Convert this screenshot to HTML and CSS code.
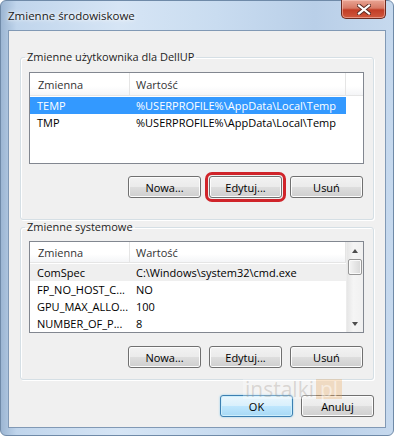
FILE: index.html
```html
<!DOCTYPE html>
<html lang="pl">
<head>
    <meta charset="UTF-8">
    <meta name="viewport" content="width=device-width, initial-scale=1.0">
    <title>Zmienne środowiskowe</title>
    <link rel="stylesheet" href="styles.css">
</head>
<body>

    <div class="window">
        <!-- Title bar -->
        <div class="titlebar">
            <span class="title">Zmienne środowiskowe</span>
            <button class="close-btn" aria-label="Zamknij">
                <svg width="14" height="11" viewBox="0 0 14 11">
                    <path d="M2 1.5 L12 9.5 M12 1.5 L2 9.5" stroke="#5a2a22" stroke-width="4" stroke-linecap="square"/>
                    <path d="M2 1.5 L12 9.5 M12 1.5 L2 9.5" stroke="#ffffff" stroke-width="2.2" stroke-linecap="square"/>
                </svg>
            </button>
        </div>

        <div class="client">
            <!-- User variables -->
            <fieldset class="group">
                <legend>Zmienne użytkownika dla DellUP</legend>
                <div class="listview">
                    <div class="lv-body">
                        <div class="lv-header">
                            <span class="col-name">Zmienna</span>
                            <span class="col-value">Wartość</span>
                            <span class="col-rest"></span>
                        </div>
                        <div class="lv-rows">
                            <div class="lv-row selected">
                                <span class="col-name">TEMP</span>
                                <span class="col-value">%USERPROFILE%\AppData\Local\Temp</span>
                            </div>
                            <div class="lv-row">
                                <span class="col-name">TMP</span>
                                <span class="col-value">%USERPROFILE%\AppData\Local\Temp</span>
                            </div>
                        </div>
                    </div>
                </div>
                <div class="btn-row">
                    <button class="btn">Nowa...</button>
                    <button class="btn marked">Edytuj...</button>
                    <button class="btn">Usuń</button>
                </div>
            </fieldset>

            <!-- System variables -->
            <fieldset class="group">
                <legend>Zmienne systemowe</legend>
                <div class="listview">
                    <div class="lv-body">
                        <div class="lv-header">
                            <span class="col-name">Zmienna</span>
                            <span class="col-value">Wartość</span>
                        </div>
                        <div class="lv-rows">
                            <div class="lv-row hot">
                                <span class="col-name">ComSpec</span>
                                <span class="col-value">C:\Windows\system32\cmd.exe</span>
                            </div>
                            <div class="lv-row">
                                <span class="col-name">FP_NO_HOST_C...</span>
                                <span class="col-value">NO</span>
                            </div>
                            <div class="lv-row">
                                <span class="col-name">GPU_MAX_ALLO...</span>
                                <span class="col-value">100</span>
                            </div>
                            <div class="lv-row">
                                <span class="col-name">NUMBER_OF_P...</span>
                                <span class="col-value">8</span>
                            </div>
                        </div>
                    </div>
                    <div class="scrollbar">
                        <div class="sb-arrow up"></div>
                        <div class="sb-thumb"></div>
                        <div class="sb-track"></div>
                        <div class="sb-arrow down"></div>
                    </div>
                </div>
                <div class="btn-row">
                    <button class="btn">Nowa...</button>
                    <button class="btn">Edytuj...</button>
                    <button class="btn">Usuń</button>
                </div>
            </fieldset>

            <div class="dialog-buttons">
                <button class="btn default">OK</button>
                <button class="btn">Anuluj</button>
            </div>
        </div>
    </div>

    <!-- watermark -->
    <div class="watermark">
        <span class="wm-text">instalki</span><span class="wm-pl">pl</span>
    </div>

</body>
</html>
```

FILE: styles.css
```css
body {
    margin: 0;
    background-color: #ffffff;
    font-family: "Open Sans", "Noto Sans", sans-serif;
    font-size: 11px;
    color: #000000;
}
.window {
    width: 394px;
    height: 436px;
    box-sizing: border-box;
    padding: 0 7px 7px 7px;
    display: flex;
    flex-direction: column;
    border: 1px solid #6f8aa8;
    border-radius: 6px;
    background: linear-gradient(to right, #9cb6d3 0%, #c0d5ec 4%, #d6e5f5 30%, #c9dcf0 55%, #b9cfe8 80%, #c6d9ee 100%);
}
.titlebar {
    height: 29px;
    display: flex;
    justify-content: space-between;
    align-items: flex-start;
}
.title {
    padding-top: 7px;
    font-size: 11.5px;
    color: #1a1a1a;
    text-shadow: 0 0 6px #ffffff, 0 0 3px #ffffff;
}
.close-btn {
    width: 45px;
    height: 19px;
    margin-top: -1px;
    padding: 0;
    border: 1px solid #6b2b20;
    border-top: none;
    border-radius: 0 0 5px 5px;
    background: linear-gradient(#e9a594 0%, #d77a66 45%, #c23d26 55%, #d0593e 100%);
    box-shadow: inset 0 0 0 1px rgba(255, 210, 200, 0.5);
    display: flex;
    align-items: center;
    justify-content: center;
}
.client {
    flex: 1;
    background-color: #f0f0f0;
    border: 1px solid #8199b5;
    padding: 19px 11px 0 11px;
}

/* group boxes */
.group {
    margin: 0;
    min-width: 0;
    padding: 8px 9px 21px 8px;
    border: 1px solid #d5dfe5;
    border-radius: 3px;
    box-shadow: inset 1px 1px 0 #ffffff, 1px 1px 0 #ffffff;
}
.group + .group {
    padding-top: 7px;
    padding-bottom: 11px;
}
.group legend {
    margin-left: -4px;
    padding: 0 2px;
    line-height: 14px;
    color: #1e1e1e;
}

/* list views */
.listview {
    height: 92px;
    box-sizing: border-box;
    border: 1px solid #828790;
    background-color: #ffffff;
    display: flex;
}
.lv-body {
    flex: 1;
    display: flex;
    flex-direction: column;
}
.lv-header {
    height: 22px;
    display: flex;
    border-bottom: 1px solid #e5e5e5;
    background: linear-gradient(#ffffff 0%, #ffffff 60%, #f4f5f7 100%);
    color: #333333;
}
.lv-header span {
    display: flex;
    align-items: center;
    border-right: 1px solid #e5e5e5;
}
.lv-header .col-rest {
    flex: 1;
    border-right: none;
}
.col-name {
    width: 100px;
    box-sizing: border-box;
    padding-left: 7px;
    white-space: nowrap;
    overflow: hidden;
}
.col-value {
    width: 216px;
    box-sizing: border-box;
    padding-left: 6px;
    white-space: nowrap;
    overflow: hidden;
}
.lv-header .col-name {
    padding-left: 8px;
}
.lv-rows {
    padding-top: 1px;
}
.lv-row {
    height: 17px;
    display: flex;
    align-items: center;
    width: 316px;
}
.lv-row.selected {
    background-color: #3399ff;
    color: #ffffff;
}
.lv-row.hot {
    background-color: #efefef;
}

/* scroll bar */
.scrollbar {
    width: 17px;
    display: flex;
    flex-direction: column;
    background: linear-gradient(to right, #e6e6e6, #f5f5f5 40%, #f0f0f0);
    border-left: 1px solid #ececec;
}
.sb-arrow {
    height: 17px;
    display: flex;
    align-items: center;
    justify-content: center;
}
.sb-arrow::after {
    content: "";
    border-left: 3px solid transparent;
    border-right: 3px solid transparent;
}
.sb-arrow.up::after {
    border-bottom: 4px solid #4d4d4d;
}
.sb-arrow.down::after {
    border-top: 4px solid #4d4d4d;
}
.sb-thumb {
    height: 14px;
    margin: 0 1px;
    border: 1px solid #979797;
    border-radius: 2px;
    background: linear-gradient(to right, #f5f5f5, #e6e6e6 50%, #d8d8d8);
    box-shadow: inset 0 0 0 1px #fafafa;
}
.sb-track {
    flex: 1;
}

/* buttons */
.btn-row {
    margin-top: 12px;
    display: flex;
    justify-content: flex-end;
    gap: 8px;
    padding-right: 1px;
}
.group + .group .btn-row {
    margin-top: 13px;
}
.btn {
    width: 73px;
    height: 22px;
    padding: 0;
    border: 1px solid #707070;
    border-radius: 3px;
    background: linear-gradient(#f2f2f2 0%, #ebebeb 48%, #dddddd 52%, #cfcfcf 100%);
    box-shadow: inset 0 0 0 1px #fcfcfc;
    font-family: "Open Sans", "Noto Sans", sans-serif;
    font-size: 11px;
    color: #000000;
}
.btn.marked {
    outline: 3px solid #d0242a;
    outline-offset: 1px;
}
.btn.default {
    border-color: #3c7fb1;
    background: linear-gradient(#eaf6fd 0%, #d9f0fc 48%, #bee6fd 52%, #a7d9f5 100%);
    box-shadow: inset 0 0 0 1px #cdeefc, 0 0 2px #7fc6ea;
}
.dialog-buttons {
    margin-top: 15px;
    display: flex;
    justify-content: flex-end;
    gap: 8px;
}

/* watermark over the dialog */
.watermark {
    position: absolute;
    left: 243px;
    top: 379px;
    display: flex;
    align-items: center;
    height: 20px;
    font-family: "Open Sans", sans-serif;
    font-size: 21px;
    line-height: 20px;
}
.wm-text {
    padding: 0 2px;
    color: rgba(150, 140, 130, 0.3);
    background-color: rgba(255, 255, 255, 0.3);
}
.wm-pl {
    padding: 0 4px;
    color: rgba(255, 255, 255, 0.5);
    background-color: rgba(240, 170, 90, 0.3);
}
```
